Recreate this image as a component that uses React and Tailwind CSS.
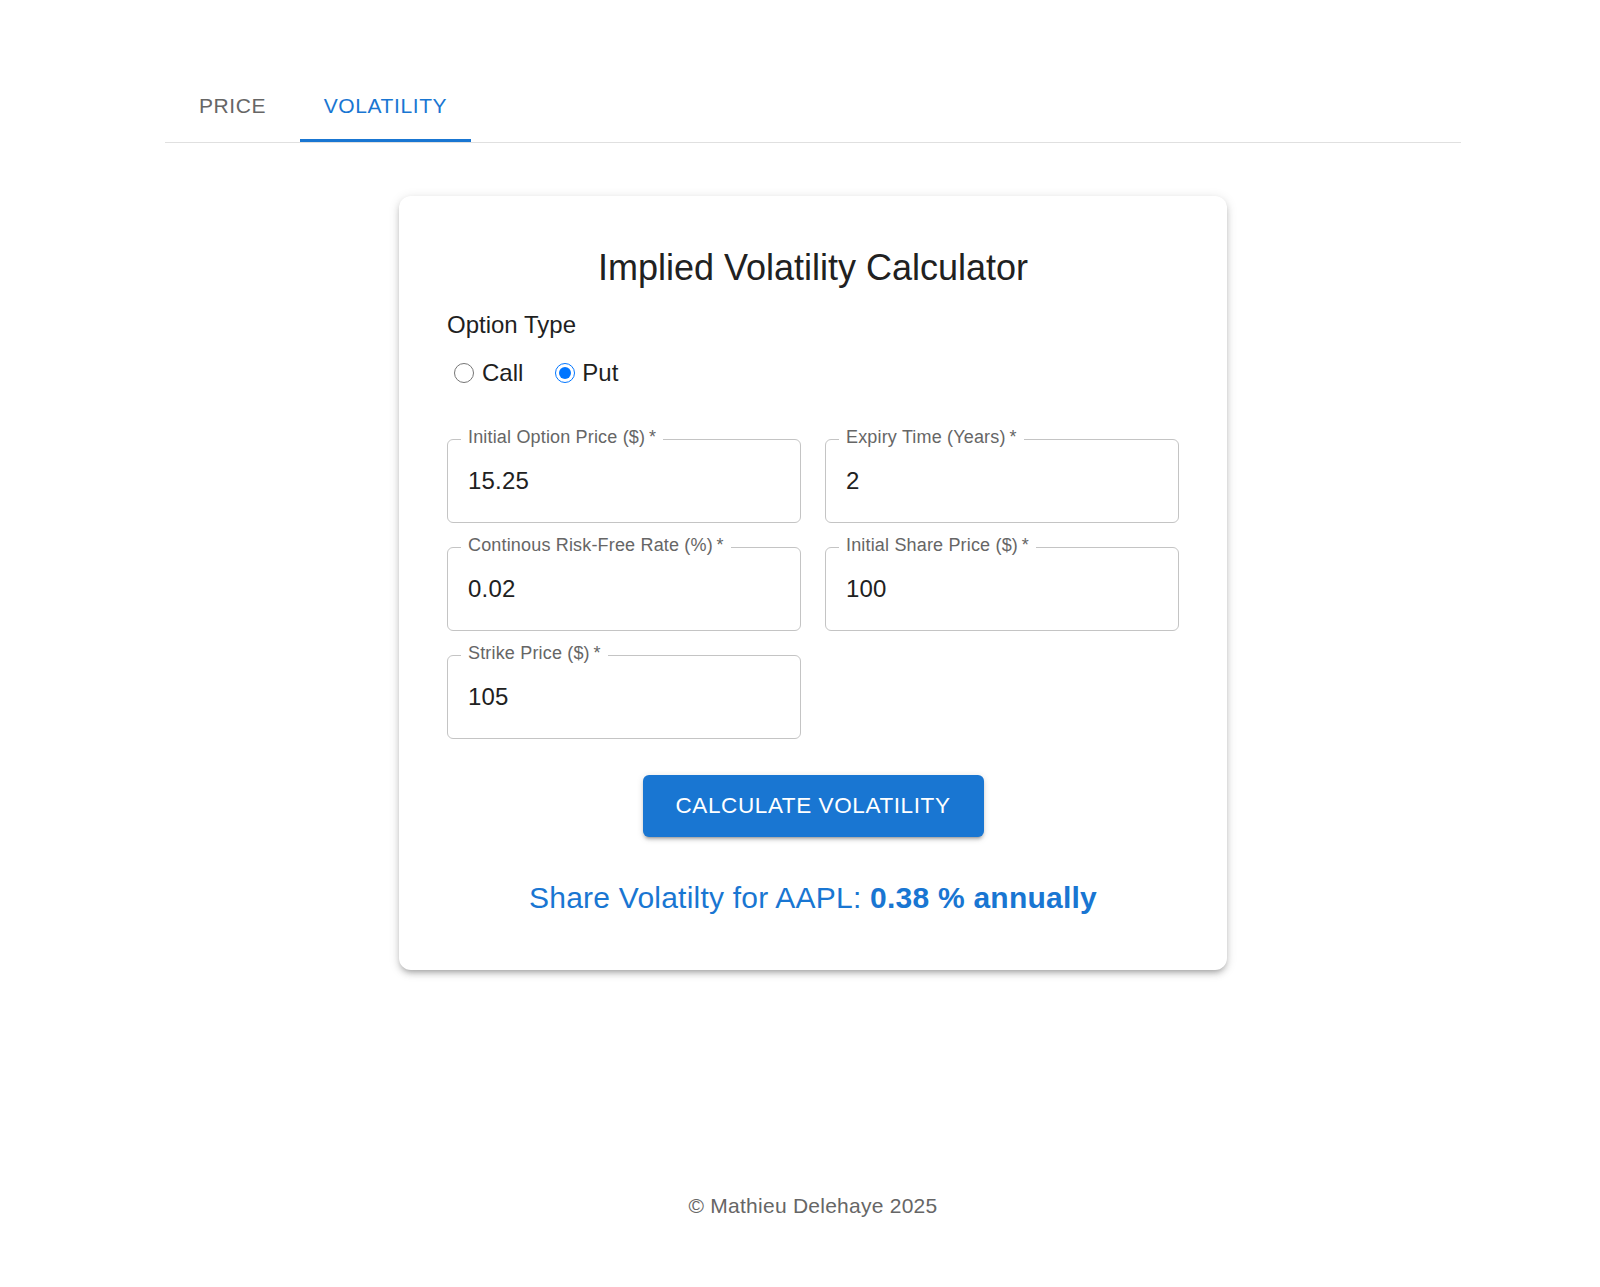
import { useState } from "react";

const fields = [
  { name: "optionPrice", label: "Initial Option Price ($)", value: "15.25" },
  { name: "expiry", label: "Expiry Time (Years)", value: "2" },
  { name: "rate", label: "Continous Risk-Free Rate (%)", value: "0.02" },
  { name: "sharePrice", label: "Initial Share Price ($)", value: "100" },
  { name: "strike", label: "Strike Price ($)", value: "105" },
];

function Field({ label, name, value, onChange }) {
  return (
    <div className="relative h-[84px] rounded-[6px] border border-[#c4c4c4]">
      <label
        htmlFor={name}
        className="absolute left-[13px] -top-[14px] bg-white px-[7px] text-[18px] leading-[22px] tracking-[0.17px] text-[#666666] whitespace-nowrap"
      >
        {label}
        <span aria-hidden="true">&thinsp;*</span>
      </label>
      <input
        id={name}
        name={name}
        value={value}
        onChange={onChange}
        className="h-full w-full bg-transparent pl-[20px] pr-[20px] text-[24px] tracking-[0.2px] text-[#212121] outline-none"
      />
    </div>
  );
}

export default function App() {
  const [tab, setTab] = useState("volatility");
  const [type, setType] = useState("put");
  const [values, setValues] = useState(
    Object.fromEntries(fields.map((f) => [f.name, f.value]))
  );

  const handleChange = (e) => {
    const { name, value } = e.target;
    setValues((prev) => ({ ...prev, [name]: value }));
  };

  return (
    <div className="min-h-screen bg-white font-['Liberation_Sans',Arial,sans-serif] pt-[70px] pb-[60px]">
      <div className="ml-[165px] w-[1296px]">
        {/* tabs */}
        <div className="flex border-b-[1.5px] border-[#e0e0e0]">
          <button
            onClick={() => setTab("price")}
            className={
              "relative h-[72px] w-[135px] text-[21px] uppercase tracking-[0.6px] " +
              (tab === "price" ? "text-[#1976d2]" : "text-[#666666]")
            }
          >
            Price
            {tab === "price" && (
              <span className="absolute bottom-0 left-0 h-[3px] w-full bg-[#1976d2]" />
            )}
          </button>
          <button
            onClick={() => setTab("volatility")}
            className={
              "relative h-[72px] w-[171px] text-[21px] uppercase tracking-[0.6px] " +
              (tab === "volatility" ? "text-[#1976d2]" : "text-[#666666]")
            }
          >
            Volatility
            {tab === "volatility" && (
              <span className="absolute bottom-0 left-0 h-[3px] w-full bg-[#1976d2]" />
            )}
          </button>
        </div>

        {/* card */}
        <div className="mx-auto mt-[53px] w-[828px] rounded-[12px] bg-white p-[48px] shadow-[0_4px_5px_-3px_rgba(0,0,0,0.2),0_4px_6px_0_rgba(0,0,0,0.14),0_2px_12px_0_rgba(0,0,0,0.12)]">
          <h1 className="text-center text-[36px] leading-[48px] text-[#212121]">
            Implied Volatility Calculator
          </h1>

          <p className="mt-[16px] text-[24px] leading-[34px] text-[#1f1f1f]">Option Type</p>

          <div className="mt-[13px] flex h-[36px] items-center text-[24px] text-[#1f1f1f]">
            <label className="flex items-center">
              <input
                type="radio"
                name="type"
                checked={type === "call"}
                onChange={() => setType("call")}
                className="ml-[7px] h-[20px] w-[20px]"
              />
              <span className="ml-[8px]">Call</span>
            </label>
            <label className="ml-[32px] flex items-center">
              <input
                type="radio"
                name="type"
                checked={type === "put"}
                onChange={() => setType("put")}
                className="h-[20px] w-[20px]"
              />
              <span className="ml-[7px]">Put</span>
            </label>
          </div>

          <div className="mt-[48px] grid grid-cols-2 gap-[24px]">
            {fields.map((f) => (
              <Field
                key={f.name}
                name={f.name}
                label={f.label}
                value={values[f.name]}
                onChange={handleChange}
              />
            ))}
          </div>

          <div className="mt-[36px] flex justify-center">
            <button className="h-[62px] rounded-[6px] bg-[#1976d2] px-[33px] text-[22.5px] uppercase tracking-[0.6px] text-white shadow-[0_4px_2px_-3px_rgba(0,0,0,0.2),0_3px_3px_0_rgba(0,0,0,0.14),0_1.5px_7px_0_rgba(0,0,0,0.12)]">
              Calculate Volatility
            </button>
          </div>

          <p className="mt-[37px] text-center text-[30px] leading-[48px] tracking-[0.225px] text-[#1976d2]">
            Share Volatilty for AAPL: <span className="font-bold">0.38 % annually</span>
          </p>
        </div>

        <p className="mt-[221px] text-center text-[21px] leading-[30px] tracking-[0.25px] text-[#666666]">
          © Mathieu Delehaye 2025
        </p>
      </div>
    </div>
  );
}
